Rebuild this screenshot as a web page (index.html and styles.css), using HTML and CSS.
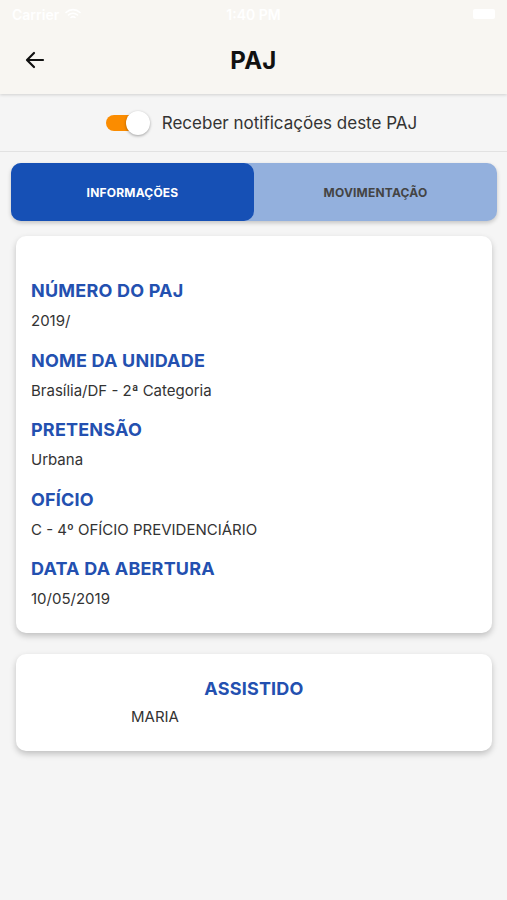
FILE: index.html
```html
<!doctype html>
<html lang="pt-BR">
  <head>
    <meta charset="utf-8">
    <meta name="viewport" content="width=device-width, initial-scale=1">
    <title>PAJ</title>
    <link rel="stylesheet" href="styles.css">
  </head>
  <body>
    <header class="topo">
      <div class="status-bar">
        <span class="operadora">Carrier
          <svg width="16" height="12" viewBox="0 0 16 12"><path d="M1 4.5a10 10 0 0 1 14 0M3.5 7a6.5 6.5 0 0 1 9 0M6 9.5a3 3 0 0 1 4 0" fill="none" stroke="#fff" stroke-width="1.6" stroke-linecap="round"/></svg>
        </span>
        <span class="hora">1:40 PM</span>
        <span class="bateria"></span>
      </div>
      <div class="barra">
        <button class="voltar" type="button" aria-label="Voltar">
          <svg width="24" height="24" viewBox="0 0 24 24"><path d="M20 12H5M11 5l-7 7 7 7" fill="none" stroke="#111" stroke-width="2.2" stroke-linecap="round" stroke-linejoin="round"/></svg>
        </button>
        <h1>PAJ</h1>
      </div>
    </header>

    <div class="notificacoes">
      <span class="chave"><span class="bolinha"></span></span>
      <span>Receber notificações deste PAJ</span>
    </div>

    <nav class="abas">
      <button type="button" class="aba ativa">INFORMAÇÕES</button>
      <button type="button" class="aba">MOVIMENTAÇÃO</button>
    </nav>

    <section class="cartao dados">
      <h2>NÚMERO DO PAJ</h2>
      <p>2019/</p>
      <h2>NOME DA UNIDADE</h2>
      <p>Brasília/DF - 2ª Categoria</p>
      <h2>PRETENSÃO</h2>
      <p>Urbana</p>
      <h2>OFÍCIO</h2>
      <p>C - 4º OFÍCIO PREVIDENCIÁRIO</p>
      <h2>DATA DA ABERTURA</h2>
      <p>10/05/2019</p>
    </section>

    <section class="cartao assistido">
      <h2>ASSISTIDO</h2>
      <p>MARIA</p>
    </section>
  </body>
</html>
```

FILE: styles.css
```css
body {
  font-family: Inter, "Liberation Sans", Arial, sans-serif;
  margin: 0;
  padding: 0;
  background-color: #f5f5f5;
  color: #333;
  min-height: 900px;
}

.topo {
  background-color: #f8f6f2;
  height: 94px;
  box-shadow: 0 1px 3px rgba(0, 0, 0, 0.15);
  position: relative;
}

.status-bar {
  height: 28px;
  display: flex;
  align-items: center;
  justify-content: space-between;
  padding: 0 12px;
  color: #fff;
  font-size: 14px;
  font-weight: 600;
}

.operadora {
  display: flex;
  align-items: center;
  gap: 6px;
  width: 80px;
}

.bateria {
  width: 22px;
  height: 10px;
  background: #fff;
  border-radius: 2px;
  margin-left: 58px;
}

.barra {
  height: 66px;
  display: flex;
  align-items: center;
  justify-content: center;
  position: relative;
}

.voltar {
  position: absolute;
  left: 21px;
  top: 18px;
  background: none;
  border: none;
  padding: 0;
  width: 28px;
  height: 28px;
  display: flex;
  align-items: center;
  justify-content: center;
}

.barra h1 {
  margin: 0 0 2px;
  font-size: 24px;
  font-weight: 700;
  color: #111;
  letter-spacing: 0.3px;
}

.notificacoes {
  height: 57px;
  border-bottom: 1px solid #e2e2e2;
  display: flex;
  align-items: center;
  justify-content: center;
  gap: 10px;
  font-size: 17px;
  color: #333;
  padding-left: 16px;
}

.chave {
  width: 34px;
  height: 16px;
  border-radius: 8px;
  background-color: #fb8c00;
  position: relative;
  margin-right: 12px;
}

.bolinha {
  position: absolute;
  left: 20px;
  top: -4px;
  width: 24px;
  height: 24px;
  border-radius: 50%;
  background: #fff;
  box-shadow: 0 1px 3px rgba(0, 0, 0, 0.35);
}

.abas {
  margin: 11px 10px 0 11px;
  display: flex;
  height: 58px;
  background-color: #93b0dd;
  border-radius: 10px;
  box-shadow: 0 2px 4px rgba(0, 0, 0, 0.2);
}

.aba {
  flex: 1;
  border: none;
  background: none;
  font-family: inherit;
  font-size: 12px;
  font-weight: 700;
  color: #444;
  border-radius: 10px;
  letter-spacing: 0.2px;
}

.aba.ativa {
  background-color: #1650b5;
  color: #fff;
}

.cartao {
  background: #fff;
  margin: 15px 15px 0 16px;
  border-radius: 10px;
  box-shadow: 0 3px 6px rgba(0, 0, 0, 0.22);
}

.cartao h2 {
  margin: 0;
  font-size: 18px;
  font-weight: 700;
  color: #2350b0;
  letter-spacing: 0.2px;
}

.cartao p {
  margin: 0;
  font-size: 15px;
  color: #333;
}

.dados {
  padding: 43px 15px 24px;
  display: flex;
  flex-direction: column;
}

.dados h2 {
  line-height: 24px;
  margin-bottom: 8px;
}

.dados p {
  line-height: 20px;
  margin-bottom: 17.5px;
}

.dados p:last-child {
  margin-bottom: 0;
}

.assistido {
  margin-top: 21px;
  padding: 23px 15px 24px;
  display: flex;
  flex-direction: column;
}

.assistido h2 {
  text-align: center;
  line-height: 24px;
  margin-bottom: 6px;
}

.assistido p {
  padding-left: 100px;
  line-height: 20px;
}
```
